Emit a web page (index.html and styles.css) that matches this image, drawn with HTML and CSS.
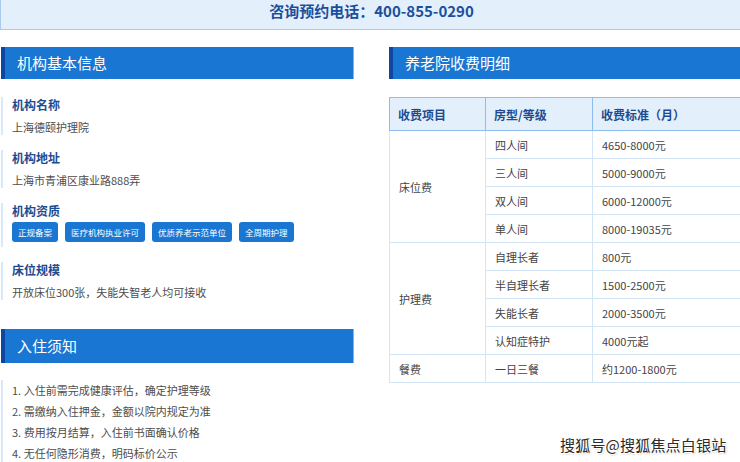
FILE: index.html
```html
<!DOCTYPE html>
<html lang="zh-CN">
<head>
<meta charset="utf-8">
<title>养老院信息</title>
<link rel="stylesheet" href="styles.css">
</head>
<body>
<div class="page">
  <div class="topbar">咨询预约电话：400-855-0290</div>
  <div class="main">
    <div class="col-left">
      <h2 class="sec-head">机构基本信息</h2>
      <div class="info-list">
        <div class="info-item">
          <div class="info-title">机构名称</div>
          <div class="info-value">上海德颐护理院</div>
        </div>
        <div class="info-item">
          <div class="info-title">机构地址</div>
          <div class="info-value">上海市青浦区康业路888弄</div>
        </div>
        <div class="info-item">
          <div class="info-title">机构资质</div>
          <div class="badges">
            <span class="badge">正规备案</span>
            <span class="badge">医疗机构执业许可</span>
            <span class="badge">优质养老示范单位</span>
            <span class="badge">全周期护理</span>
          </div>
        </div>
        <div class="info-item">
          <div class="info-title">床位规模</div>
          <div class="info-value">开放床位300张，失能失智老人均可接收</div>
        </div>
      </div>
      <h2 class="sec-head sec-head-2">入住须知</h2>
      <ul class="notice">
        <li>1. 入住前需完成健康评估，确定护理等级</li>
        <li>2. 需缴纳入住押金，金额以院内规定为准</li>
        <li>3. 费用按月结算，入住前书面确认价格</li>
        <li>4. 无任何隐形消费，明码标价公示</li>
      </ul>
    </div>
    <div class="col-right">
      <h2 class="sec-head">养老院收费明细</h2>
      <table class="fees">
        <thead>
          <tr><th class="c1">收费项目</th><th class="c2">房型/等级</th><th>收费标准（月）</th></tr>
        </thead>
        <tbody>
          <tr><td rowspan="4">床位费</td><td>四人间</td><td>4650-8000元</td></tr>
          <tr><td>三人间</td><td>5000-9000元</td></tr>
          <tr><td>双人间</td><td>6000-12000元</td></tr>
          <tr><td>单人间</td><td>8000-19035元</td></tr>
          <tr><td rowspan="4">护理费</td><td>自理长者</td><td>800元</td></tr>
          <tr><td>半自理长者</td><td>1500-2500元</td></tr>
          <tr><td>失能长者</td><td>2000-3500元</td></tr>
          <tr><td>认知症特护</td><td>4000元起</td></tr>
          <tr><td>餐费</td><td>一日三餐</td><td>约1200-1800元</td></tr>
        </tbody>
      </table>
    </div>
  </div>
  <div class="watermark">搜狐号@搜狐焦点白银站</div>
</div>
</body>
</html>
```

FILE: styles.css
```css
html, body {
  margin: 0;
  padding: 0;
  overflow: hidden;
  background: #ffffff;
}
body {
  font-family: "Noto Sans CJK SC", "Noto Sans", sans-serif;
  color: #444;
}
.page {
  position: relative;
  width: 740px;
  height: 462px;
}
.topbar {
  box-sizing: border-box;
  width: 742px;
  height: 30px;
  background: #e3f0fc;
  border-left: 1px solid #a9cbef;
  border-bottom: 1px solid #a9cbef;
  text-align: center;
  font-size: 15px;
  font-weight: bold;
  line-height: 22px;
  color: #1b4f9e;
}
.main {
  display: grid;
  grid-template-columns: 353px 370px;
  column-gap: 35px;
  padding-left: 1px;
  margin-top: 17px;
}
.sec-head {
  box-sizing: border-box;
  margin: 0;
  height: 32px;
  background: #1976d2;
  border-left: 4px solid #0d47a1;
  border-right: 1px solid #7fb6ee;
  padding-left: 12px;
  color: #ffffff;
  font-size: 15px;
  font-weight: normal;
  line-height: 32px;
}
.sec-head-2 {
  margin-top: 29px;
  height: 34px;
  line-height: 34px;
}
.info-list {
  margin-top: 18px;
}
.info-item {
  border-left: 2px solid #d7e8fa;
  padding-left: 9px;
  margin-bottom: 15px;
}
.info-title {
  font-size: 12px;
  font-weight: bold;
  line-height: 16px;
  color: #1e4b8f;
}
.info-value {
  margin-top: 6px;
  font-size: 11px;
  line-height: 16px;
  color: #4d4d4d;
}
.badges {
  display: flex;
  gap: 7px;
  margin-top: 3px;
  padding-bottom: 5px;
}
.badge {
  display: block;
  height: 20px;
  padding: 0 6px;
  background: #1976d2;
  border-radius: 3px;
  color: #ffffff;
  font-size: 8.5px;
  line-height: 20px;
}
.notice {
  list-style: none;
  margin: 17px 0 0 0;
  padding: 0 0 0 9px;
  border-left: 2px solid #d7e8fa;
}
.notice li {
  font-size: 11px;
  line-height: 21px;
  color: #4d4d4d;
}
.fees {
  margin-top: 18px;
  width: 100%;
  border-collapse: collapse;
  font-size: 11px;
  color: #444;
}
.fees th {
  height: 33px;
  box-sizing: border-box;
  padding: 0 8px;
  background: #e3f0fc;
  border: 1px solid #8ebdeb;
  text-align: left;
  font-size: 12px;
  font-weight: bold;
  color: #1e4b8f;
}
.fees th.c1 { width: 96px; }
.fees th.c2 { width: 107px; }
.fees td {
  height: 28px;
  box-sizing: border-box;
  padding: 0 9px;
  border: 1px solid #d3e6f8;
  line-height: 16px;
}
.watermark {
  position: absolute;
  left: 560px;
  top: 435px;
  font-size: 15px;
  line-height: 20px;
  letter-spacing: 0.2px;
  color: #2a2a2a;
  text-shadow: 1px 1px 0 #ffffff, -1px -1px 0 #ffffff, 1px -1px 0 #ffffff, -1px 1px 0 #ffffff, 1px 1px 2px #999;
}
```
